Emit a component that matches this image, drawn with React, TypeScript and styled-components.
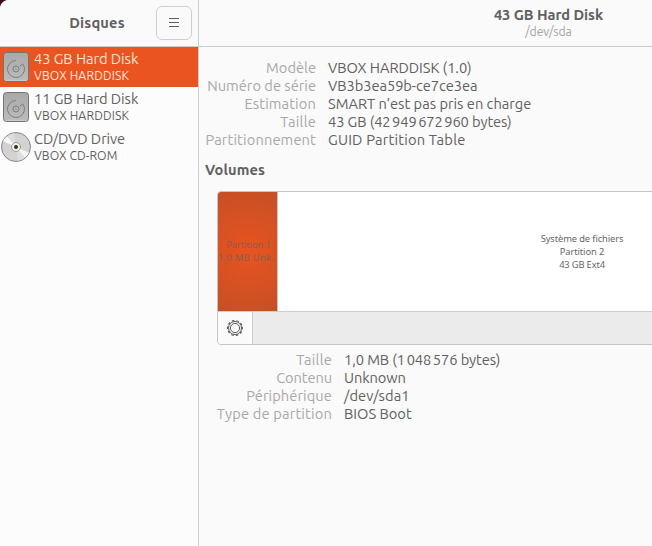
import React from "react";
import styled, { createGlobalStyle } from "styled-components";

const Global = createGlobalStyle`
  * { box-sizing: border-box; }
  body {
    margin: 0;
    overflow: hidden;
    background: #fafafa;
    color: #606060;
    font: 14.667px/18px Ubuntu, "Noto Sans", sans-serif;
  }
`;

const Window = styled.div`
  display: flex;
  width: 652px;
  height: 546px;
  overflow: hidden;
  background: radial-gradient(circle at 9px 9px, #fafafa 8.7px, #3b0c26 9.7px) 0 0 / 9px 9px no-repeat, #fafafa;
`;

const Sidebar = styled.aside`
  display: flex;
  flex-direction: column;
  flex: 0 0 199px;
  border-right: 1px solid #cfcfcf;
`;

const Main = styled.main`
  flex: 1;
  min-width: 0;
`;

const SideHeader = styled.header`
  display: flex;
  align-items: center;
  height: 47px;
  padding: 0 6px 0 38px;
  border-bottom: 1px solid #cdcdcd;
`;

const Title = styled.h1<{ $track?: number }>`
  margin: 0;
  flex: 1;
  text-align: center;
  white-space: nowrap;
  font-size: 14.667px;
  line-height: 18px;
  font-weight: 600;
  letter-spacing: ${(p) => p.$track ?? 0}px;
`;

const MenuButton = styled.button`
  display: flex;
  align-items: center;
  justify-content: center;
  width: 36px;
  height: 34px;
  margin-top: -1px;
  padding: 0;
  border: 1px solid #cfcfcf;
  border-radius: 6px;
  background: #fafafa;
`;

const DeviceList = styled.div`
  flex: 1;
  background: #fcfcfc;
`;

const Device = styled.div<{ $selected?: boolean }>`
  display: flex;
  align-items: center;
  height: 40px;
  gap: 2px;
  background: ${(p) => (p.$selected ? "#e95420" : "transparent")};
  color: ${(p) => (p.$selected ? "#fbe5dc" : "#606060")};
  svg { flex: none; }
`;

const DeviceText = styled.div`
  display: flex;
  flex-direction: column;
  white-space: nowrap;
  padding-bottom: 2px;
`;

const DeviceName = styled.span<{ $track: number }>`
  align-self: flex-start;
  line-height: 18px;
  letter-spacing: ${(p) => p.$track}px;
`;

const DeviceModel = styled(DeviceName)`
  font-size: 12.22px;
  line-height: 15px;
`;

const MainHeader = styled.header`
  display: flex;
  flex-direction: column;
  align-items: center;
  width: 699px;
  height: 47px;
  padding-top: 6px;
  border-bottom: 1px solid #cdcdcd;
  ${Title} { flex: none; }
`;

const Subtitle = styled.span<{ $track: number }>`
  font-size: 12.22px;
  line-height: 15px;
  color: #a3a3a3;
  letter-spacing: ${(p) => p.$track}px;
`;

const Properties = styled.dl<{ $labelWidth: number }>`
  display: grid;
  grid-template-columns: ${(p) => p.$labelWidth}px 1fr;
  grid-auto-rows: 18px;
  column-gap: 12px;
  margin: 0;
  white-space: nowrap;
`;

const Label = styled.dt<{ $track: number }>`
  justify-self: end;
  color: #a8a8a8;
  letter-spacing: ${(p) => p.$track}px;
`;

const Value = styled.dd<{ $track: number }>`
  justify-self: start;
  margin: 0;
  letter-spacing: ${(p) => p.$track}px;
`;

const DriveInfo = styled.section`
  padding: 12px 0 0 6px;
`;

const SectionTitle = styled.h2<{ $track: number }>`
  margin: 12px 0 12px 6px;
  font-size: 14.667px;
  line-height: 18px;
  font-weight: 600;
  letter-spacing: ${(p) => p.$track}px;
`;

const Volumes = styled.section`
  width: 670px;
  height: 154px;
  margin-left: 18px;
  border: 1px solid #c4c4c4;
  border-radius: 4px;
  overflow: hidden;
  background: #ebebeb;
`;

const Partitions = styled.div`
  display: flex;
  height: 120px;
  border-bottom: 1px solid #cdcdcd;
  background: #fff;
`;

const Partition = styled.div<{ $width: number; $selected?: boolean }>`
  display: flex;
  flex-direction: column;
  align-items: center;
  justify-content: center;
  flex: 0 0 ${(p) => p.$width}px;
  min-width: 0;
  overflow: hidden;
  padding-bottom: ${(p) => (p.$selected ? 1 : 0)}px;
  padding-left: ${(p) => (p.$selected ? 0 : 1)}px;
  border-right: 1px solid #c4c4c4;
  font: 9.33px/13px "Noto Sans", sans-serif;
  white-space: nowrap;
  color: ${(p) => (p.$selected ? "#86604f" : "#666")};
  background: ${(p) =>
    p.$selected ? "radial-gradient(circle at center, #e95420 0, #c64f25 66px)" : "#fff"};
`;

const PartitionLine = styled.span<{ $track?: number; $start?: boolean; $indent?: number }>`
  align-self: ${(p) => (p.$start ? "flex-start" : "center")};
  padding-left: ${(p) => p.$indent ?? 0}px;
  letter-spacing: ${(p) => p.$track ?? 0}px;
`;

const GearButton = styled.button`
  display: flex;
  align-items: center;
  justify-content: center;
  width: 35px;
  height: 32px;
  padding: 0;
  border: 0;
  border-right: 1px solid #cdcdcd;
  background: #fafafa;
`;

const VolumeInfo = styled.section`
  padding: 6px 0 0 18px;
`;

const HardDiskIcon = () => (
  <svg width="32" height="32" viewBox="0 0 32 32" fill="none">
    <defs>
      <linearGradient id="metal" x1="0" y1="0" x2="0" y2="1">
        <stop offset="0" stopColor="#a8a8a8" />
        <stop offset="1" stopColor="#bdbdbd" />
      </linearGradient>
    </defs>
    <rect x="3.5" y="1.5" width="25" height="29" rx="3" fill="url(#metal)" stroke="#747474" />
    <path d="M5.5 29.5h21" stroke="#cacaca" />
    <path d="M16 9.5A8.5 8.5 0 1 0 22.8 12.9L19.8 15.2" stroke="#7d7d7d" strokeWidth="1" />
    <circle cx="16" cy="18" r="3" stroke="#7d7d7d" />
    <circle cx="16" cy="18" r="0.8" fill="#8d8d8d" />
  </svg>
);

const DiscIcon = () => (
  <svg width="32" height="32" viewBox="0 0 32 32" fill="none">
    <circle cx="16" cy="16" r="14.5" fill="#d2d2d2" stroke="#858585" />
    <path d="M16 16L3.2 10.2A14 14 0 0 1 7.2 5.2Z M16 16L28.8 21.8A14 14 0 0 1 24.8 26.8Z" fill="#f7f7f7" />
    <path d="M16 16L7.2 5.2A14 14 0 0 1 14 2.2Z M16 16L24.8 26.8A14 14 0 0 1 18 29.8Z" fill="#dedede" />
    <circle cx="16" cy="16" r="4.5" fill="#f6f2e8" stroke="#a39b8b" />
    <circle cx="16" cy="16" r="2" fill="#303030" />
  </svg>
);

const MenuIcon = () => (
  <svg width="16" height="16" viewBox="0 0 16 16" stroke="#5d5d5d">
    <path d="M3 3.5h10M3 7.5h10M3 11.5h10" />
  </svg>
);

const GearIcon = () => (
  <svg width="18" height="18" viewBox="0 0 18 18" fill="none" stroke="#5d5d5d">
    <circle cx="9" cy="9" r="7.4" strokeWidth="1.2" strokeDasharray="2.6 2.05" transform="rotate(-9 9 9)" />
    <circle cx="9" cy="9" r="6.5" strokeWidth="1" />
    <circle cx="9" cy="9" r="4.6" strokeWidth="1" />
  </svg>
);

type Row = [label: string, labelTrack: number, value: string, valueTrack: number];

const driveRows: Row[] = [
  ["Modèle", 0, "VBOX HARDDISK (1.0)", -0.06],
  ["Numéro de série", 0, "VB3b3ea59b-ce7ce3ea", -0.06],
  ["Estimation", 0.12, "SMART n’est pas pris en charge", 0],
  ["Taille", 0.2, "43 GB (42\u202f949\u202f672\u202f960 bytes)", -0.1],
  ["Partitionnement", 0.13, "GUID Partition Table", 0.2],
];

const volumeRows: Row[] = [
  ["Taille", 0.2, "1,0 MB (1\u202f048\u202f576 bytes)", -0.08],
  ["Contenu", -0.1, "Unknown", -0.1],
  ["Périphérique", 0.08, "/dev/sda1", 0.1],
  ["Type de partition", 0.17, "BIOS Boot", 0],
];

const PropertyList = ({ rows, labelWidth }: { rows: Row[]; labelWidth: number }) => (
  <Properties $labelWidth={labelWidth}>
    {rows.map(([label, labelTrack, value, valueTrack]) => (
      <React.Fragment key={label}>
        <Label $track={labelTrack}>{label}</Label>
        <Value $track={valueTrack}>{value}</Value>
      </React.Fragment>
    ))}
  </Properties>
);

export default function App() {
  return (
    <>
      <Global />
      <Window>
        <Sidebar>
          <SideHeader>
            <Title $track={0.16}>Disques</Title>
            <MenuButton aria-label="Menu"><MenuIcon /></MenuButton>
          </SideHeader>
          <DeviceList>
            <Device $selected>
              <HardDiskIcon />
              <DeviceText>
                <DeviceName $track={-0.06}>43 GB Hard Disk</DeviceName>
                <DeviceModel $track={0.12}>VBOX HARDDISK</DeviceModel>
              </DeviceText>
            </Device>
            <Device>
              <HardDiskIcon />
              <DeviceText>
                <DeviceName $track={-0.06}>11 GB Hard Disk</DeviceName>
                <DeviceModel $track={0.12}>VBOX HARDDISK</DeviceModel>
              </DeviceText>
            </Device>
            <Device>
              <DiscIcon />
              <DeviceText>
                <DeviceName $track={-0.08}>CD/DVD Drive</DeviceName>
                <DeviceModel $track={0.08}>VBOX CD-ROM</DeviceModel>
              </DeviceText>
            </Device>
          </DeviceList>
        </Sidebar>
        <Main>
          <MainHeader>
            <Title $track={-0.05}>43 GB Hard Disk</Title>
            <Subtitle $track={-0.1}>/dev/sda</Subtitle>
          </MainHeader>
          <DriveInfo>
            <PropertyList rows={driveRows} labelWidth={111} />
          </DriveInfo>
          <SectionTitle $track={0.08}>Volumes</SectionTitle>
          <Volumes>
            <Partitions>
              <Partition $width={60} $selected>
                <PartitionLine $indent={2} $track={-0.1}>Partition 1</PartitionLine>
                <PartitionLine $start $track={0.32}>1,0 MB Unk…</PartitionLine>
              </Partition>
              <Partition $width={608}>
                <PartitionLine $track={-0.11}>Système de fichiers</PartitionLine>
                <PartitionLine $track={-0.1}>Partition 2</PartitionLine>
                <PartitionLine $track={-0.15}>43 GB Ext4</PartitionLine>
              </Partition>
            </Partitions>
            <GearButton aria-label="Options"><GearIcon /></GearButton>
          </Volumes>
          <VolumeInfo>
            <PropertyList rows={volumeRows} labelWidth={115} />
          </VolumeInfo>
        </Main>
      </Window>
    </>
  );
}
